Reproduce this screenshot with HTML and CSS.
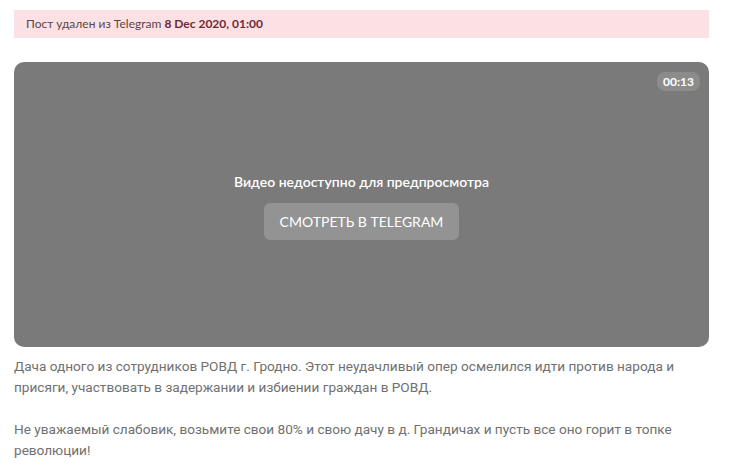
FILE: index.html
```html
<!DOCTYPE html>
<html lang="ru">
<head>
  <meta charset="UTF-8">
  <title>Пост</title>
  <link rel="stylesheet" href="styles.css">
</head>
<body>

  <div class="post">
    <div class="deleted">Пост удален из Telegram <b>8 Dec 2020, 01:00</b></div>

    <!-- видео -->
    <div class="video">
      <span class="duration">00:13</span>
      <div class="video-note">Видео недоступно для предпросмотра</div>
      <a class="tg-button" href="#">СМОТРЕТЬ В TELEGRAM</a>
    </div>

    <div class="text">
      <p>Дача одного из сотрудников РОВД г. Гродно. Этот неудачливый опер осмелился идти против народа и присяги, участвовать в задержании и избиении граждан в РОВД.</p>
      <p>Не уважаемый слабовик, возьмите свои 80% и свою дачу в д. Грандичах и пусть все оно горит в топке революции!</p>
    </div>
  </div>

</body>
</html>
```

FILE: styles.css
```css
body {
  margin: 0;
  background-color: #fff;
  font-family: Lato, "Noto Sans", Arial, sans-serif;
}
.post {
  width: 695px;
  padding: 10px 0 0 14px;
}
.deleted {
  background-color: #fbe1e4;
  color: #5e4448;
  font-size: 12px;
  height: 28px;
  line-height: 28px;
  padding: 0 12px;
}
.deleted b {
  color: #6e2a33;
}
.video {
  position: relative;
  margin-top: 24px;
  height: 285px;
  background-color: #7a7a7a;
  border-radius: 10px;
  display: flex;
  flex-direction: column;
  align-items: center;
  justify-content: center;
  gap: 13px;
  padding-top: 4px;
  box-sizing: border-box;
}
.duration {
  position: absolute;
  top: 10px;
  right: 9px;
  background-color: #8c8c8c;
  color: #fff;
  font-size: 12px;
  font-weight: bold;
  padding: 2px 6px;
  border-radius: 8px;
}
.video-note {
  color: #fff;
  font-size: 14px;
  font-weight: 600;
}
.tg-button {
  display: block;
  width: 195px;
  height: 37px;
  line-height: 37px;
  text-align: center;
  background-color: #939393;
  color: #fff;
  font-size: 14px;
  text-decoration: none;
  border-radius: 6px;
}
.text {
  color: #707070;
  font-family: Roboto, Arial, sans-serif;
  font-size: 13.6px;
  line-height: 21px;
  padding-top: 9px;
}
.text p {
  margin: 0 0 21px;
}
```
